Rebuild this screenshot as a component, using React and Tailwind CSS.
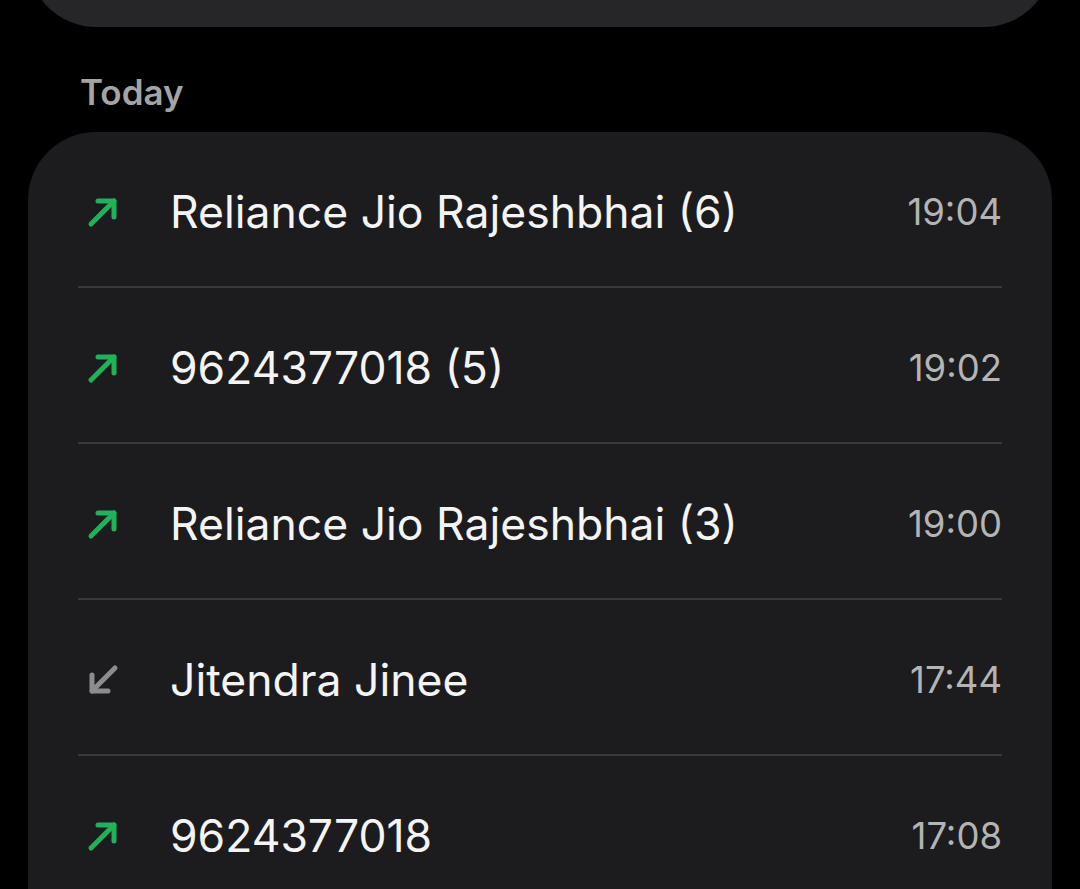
import React from "react";

const calls = [
  { name: "Reliance Jio Rajeshbhai (6)", time: "19:04", dir: "out" },
  { name: "9624377018 (5)", time: "19:02", dir: "out" },
  { name: "Reliance Jio Rajeshbhai (3)", time: "19:00", dir: "out" },
  { name: "Jitendra Jinee", time: "17:44", dir: "in" },
  { name: "9624377018", time: "17:08", dir: "out" },
];

const OutgoingIcon = () => (
  <svg width="32" height="32" viewBox="0 0 32 32" fill="none" stroke="#1fb25a" strokeWidth="5" strokeLinecap="round" strokeLinejoin="round">
    <path d="M4 28 L27 5" />
    <path d="M11 5 H27 V21" />
  </svg>
);

const IncomingIcon = () => (
  <svg width="32" height="32" viewBox="0 0 32 32" fill="none" stroke="#8c8c8c" strokeWidth="5" strokeLinecap="round" strokeLinejoin="round">
    <path d="M28 4 L5 27" />
    <path d="M5 11 V27 H21" />
  </svg>
);

const CallRow = ({ call, last }) => (
  <div>
    <div className="flex h-[154px] items-center px-[50px] pt-[6px]">
      <div className="flex w-[92px] items-center pl-[9px]">
        {call.dir === "out" ? <OutgoingIcon /> : <IncomingIcon />}
      </div>
      <div className="flex-1 text-[44.5px] leading-none text-[#f4f4f4]">{call.name}</div>
      <div className="text-[36.5px] leading-none text-[#b4b4b4]">{call.time}</div>
    </div>
    {!last && <div className="mx-[50px] h-[2px] bg-[#39393b]" />}
  </div>
);

export default function App() {
  return (
    <div
      className="h-[889px] w-[1080px] overflow-hidden bg-black"
      style={{ fontFamily: "Inter, Roboto, sans-serif" }}
    >
      <div className="mx-[28px] -mt-[120px] h-[147px] rounded-[68px] bg-[#262628]" />
      <div className="px-[80px] pt-[46px] pb-[20px] text-[35px] font-semibold leading-[39px] text-[#a4a4a4]">
        Today
      </div>
      <div className="mx-[28px] rounded-t-[68px] bg-[#1c1c1e] pb-[40px]">
        {calls.map((c, i) => (
          <CallRow key={i} call={c} last={i === calls.length - 1} />
        ))}
      </div>
    </div>
  );
}
